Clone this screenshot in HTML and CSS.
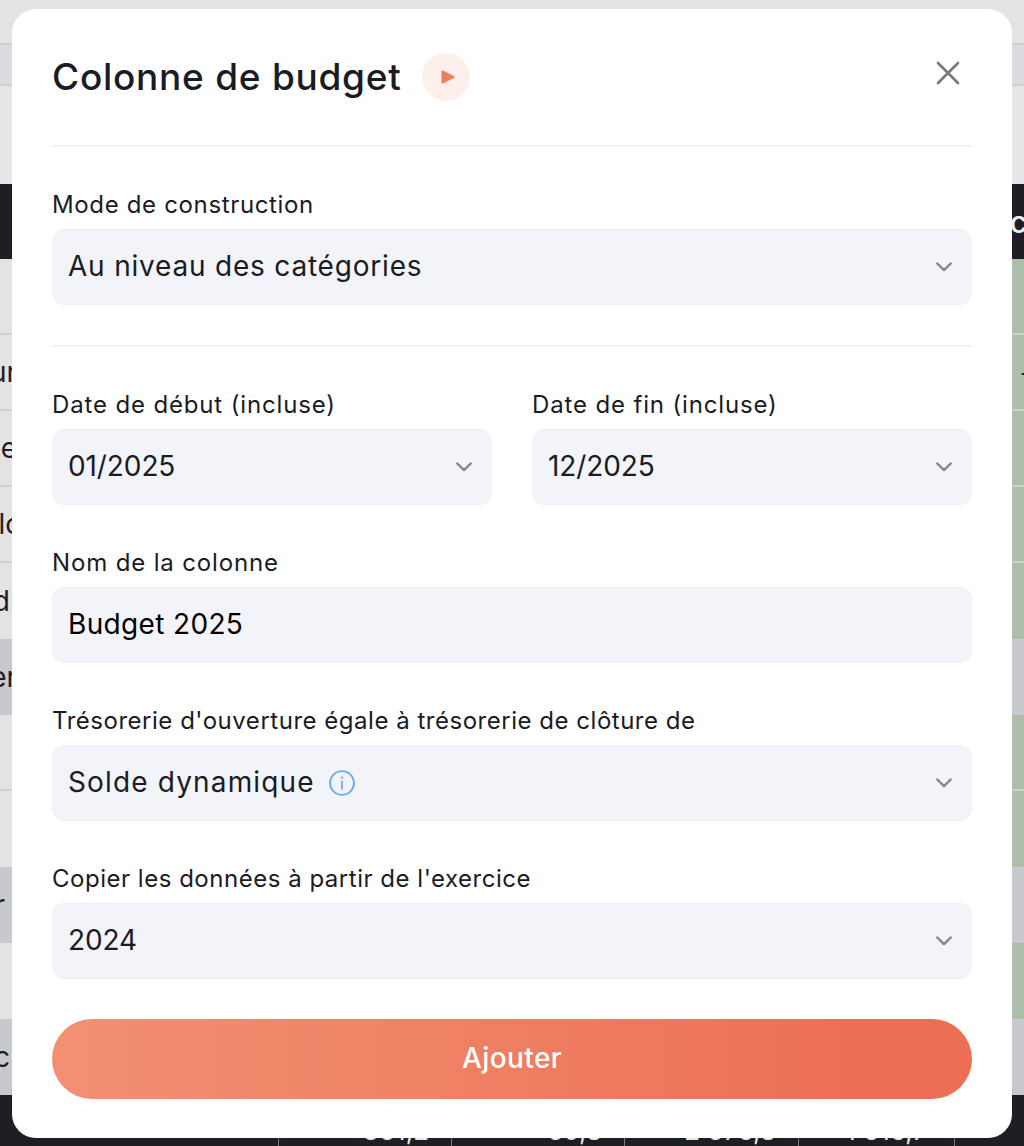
FILE: index.html
```html
<!DOCTYPE html>
<html lang="fr">
<head>
<meta charset="utf-8">
<title>Colonne de budget</title>
<link rel="stylesheet" href="styles.css">
</head>
<body>
<div class="page">
  <div class="backdrop">
    <div class="strip strip-top"></div>
    <div class="strip strip-sub"></div>
    <div class="strip strip-gap"></div>
    <div class="thead"><span class="right-frag">c</span></div>
    <div class="row"><span class="left"></span><span class="right"></span></div>
    <div class="row"><span class="left">ur</span><span class="right"><i class="dash">-</i></span></div>
    <div class="row"><span class="left">e</span><span class="right"></span></div>
    <div class="row"><span class="left narrow-lo">lo</span><span class="right"></span></div>
    <div class="row last"><span class="left narrow-d">d</span><span class="right"></span></div>
    <div class="row total"><span class="left">er</span><span class="right"></span></div>
    <div class="row"><span class="left"></span><span class="right"></span></div>
    <div class="row last"><span class="left"></span><span class="right"></span></div>
    <div class="row total"><span class="left narrow-r">r</span><span class="right"></span></div>
    <div class="row last"><span class="left"></span><span class="right"></span></div>
    <div class="row total"><span class="left narrow-d">c</span><span class="right"></span></div>
    <div class="tfoot">
      <span class="foot foot-a">361,2</span>
      <span class="foot foot-b">60,8</span>
      <span class="foot foot-c">2 676,8</span>
      <span class="foot foot-d">1 616,7</span>
      <span class="foot foot-e"></span>
    </div>
  </div>

  <section class="modal">
    <header class="modal-head">
      <h1 class="title">Colonne de budget</h1>
      <span class="play">
        <svg width="14" height="14" viewBox="0 0 14 14"><path d="M1.5 1.5 L12.5 7 L1.5 12.5 Z" fill="#ef7d60" stroke="#ef7d60" stroke-width="2" stroke-linejoin="round"/></svg>
      </span>
      <button class="close" type="button" aria-label="Fermer">
        <svg width="24" height="24" viewBox="0 0 24 24"><path d="M2 2 L22 22 M22 2 L2 22" stroke="#77777c" stroke-width="2.6" stroke-linecap="round" fill="none"/></svg>
      </button>
    </header>

    <div class="form">
      <div class="field">
        <label class="label label-mode">Mode de construction</label>
        <div class="control"><span class="value">Au niveau des catégories</span>
          <svg class="chev" width="16" height="10" viewBox="0 0 16 10"><path d="M1.3 1.5 L8 8.2 L14.7 1.5" stroke="#85858a" stroke-width="2.4" stroke-linecap="round" stroke-linejoin="round" fill="none"/></svg>
        </div>
      </div>

      <hr class="rule">

      <div class="pair">
        <div class="field">
          <label class="label label-wide">Date de début (incluse)</label>
          <div class="control"><span class="value value-digits">01/2025</span>
            <svg class="chev" width="16" height="10" viewBox="0 0 16 10"><path d="M1.3 1.5 L8 8.2 L14.7 1.5" stroke="#85858a" stroke-width="2.4" stroke-linecap="round" stroke-linejoin="round" fill="none"/></svg>
          </div>
        </div>
        <div class="field">
          <label class="label label-wide">Date de fin (incluse)</label>
          <div class="control"><span class="value value-digits">12/2025</span>
            <svg class="chev" width="16" height="10" viewBox="0 0 16 10"><path d="M1.3 1.5 L8 8.2 L14.7 1.5" stroke="#85858a" stroke-width="2.4" stroke-linecap="round" stroke-linejoin="round" fill="none"/></svg>
          </div>
        </div>
      </div>

      <div class="field">
        <label class="label label-wide">Nom de la colonne</label>
        <div class="control"><span class="value value-strong">Budget 2025</span></div>
      </div>

      <div class="field">
        <label class="label">Trésorerie d'ouverture égale à trésorerie de clôture de</label>
        <div class="control">
          <span class="value value-wide">Solde dynamique</span>
          <svg class="info" width="26" height="26" viewBox="0 0 26 26"><circle cx="13" cy="13" r="11.9" stroke="#6aa9f5" stroke-width="1.9" fill="none"/><path d="M13 11.5 V19" stroke="#6aa9f5" stroke-width="1.7" stroke-linecap="round"/><circle cx="13" cy="7.6" r="1.2" fill="#6aa9f5"/></svg>
          <svg class="chev" width="16" height="10" viewBox="0 0 16 10"><path d="M1.3 1.5 L8 8.2 L14.7 1.5" stroke="#85858a" stroke-width="2.4" stroke-linecap="round" stroke-linejoin="round" fill="none"/></svg>
        </div>
      </div>

      <div class="field">
        <label class="label">Copier les données à partir de l'exercice</label>
        <div class="control"><span class="value value-digits">2024</span>
          <svg class="chev" width="16" height="10" viewBox="0 0 16 10"><path d="M1.3 1.5 L8 8.2 L14.7 1.5" stroke="#85858a" stroke-width="2.4" stroke-linecap="round" stroke-linejoin="round" fill="none"/></svg>
        </div>
      </div>

      <button class="submit" type="button">Ajouter</button>
    </div>
  </section>
</div>
</body>
</html>
```
FILE: styles.css
```css
* { box-sizing: border-box; }
html, body { margin: 0; padding: 0; }
body { font-family: "Inter", "Liberation Sans", sans-serif; background: #e4e4e5; }

.page { position: relative; width: 1024px; height: 1146px; overflow: hidden; }

/* dimmed table behind the dialog */
.backdrop { display: flex; flex-direction: column; height: 100%; color: #1e1f24; font-size: 28px; }
.strip, .thead, .row { flex: none; }
.strip-top { height: 43px; background: #e3e3e4; }
.strip-sub { height: 43px; background: #dcdce0; border-top: 2px solid #d0d0d4; border-bottom: 2px solid #d0d0d4; }
.strip-gap { height: 98px; background: #e6e6e7; }
.thead { height: 75px; background: #1e1f24; display: flex; justify-content: flex-end; align-items: center; overflow: hidden; }
.right-frag { color: #f0f0f0; font-size: 30px; font-weight: 500; margin-right: -3px; white-space: nowrap; }
.row { height: 76px; display: flex; justify-content: space-between; align-items: stretch; background: #e3e3e4; border-bottom: 2px solid #cfcfd2; }
.row.last { border-bottom: 0; }
.row.total { background: #c8c9ce; border-bottom: 0; }
.left { width: 17px; display: flex; justify-content: flex-end; align-items: center; white-space: nowrap; overflow: hidden; }
.narrow-lo { width: 22px; }
.narrow-d { width: 10px; }
.narrow-r { width: 5px; }
.right { width: 12px; background: #aebdac; position: relative; overflow: hidden; display: flex; align-items: center; }
.row.total .right { background: #c8c9ce; }
.dash { font-style: normal; margin-left: 8px; color: #1e1f24; font-size: 24px; }
.tfoot { flex: 1; background: #1e1f24; display: flex; color: #e8e8e8; font-size: 26px; padding-top: 20px; padding-left: 278px; }
.foot { border-left: 1px solid #77777c; text-align: right; padding-right: 22px; height: 40px; flex: none; white-space: nowrap; }
.foot-a { width: 173px; }
.foot-b { width: 173px; }
.foot-c { width: 174px; }
.foot-d { width: 156px; padding-right: 27px; }
.foot-e { width: 70px; }

/* dialog */
.modal { position: absolute; left: 12px; top: 9px; width: 1000px; height: 1129px; background: #fff; border-radius: 24px; padding: 40px 40px 39px; color: #1a1b23; }
.modal-head { display: flex; align-items: center; gap: 20px; height: 56px; }
.title { margin: 0; font-size: 37px; font-weight: 500; letter-spacing: .74px; line-height: 56px; white-space: nowrap; }
.play { width: 48px; height: 48px; border-radius: 50%; background: #fdf0ec; display: flex; align-items: center; justify-content: center; padding-left: 4px; }
.play svg { display: block; }
.close { margin-left: auto; align-self: flex-start; width: 48px; height: 48px; border: 0; padding: 0; background: none; display: flex; align-items: center; justify-content: center; }

.form { display: flex; flex-direction: column; gap: 40px; margin-top: 40px; border-top: 2px solid #f2f2f7; padding-top: 40px; }
.rule { width: 100%; height: 2px; margin: 0; border: 0; background: #f2f2f7; }
.pair { display: grid; grid-template-columns: 440px 440px; column-gap: 40px; }
.field { display: flex; flex-direction: column; gap: 6px; }
.label { display: block; font-size: 24px; line-height: 36px; letter-spacing: .52px; white-space: nowrap; }
.label-mode { letter-spacing: .65px; }
.label-wide { letter-spacing: .85px; }
.control { height: 76px; background: #f3f4f9; border: 1px solid #f0f1f6; border-radius: 12px; display: flex; align-items: center; padding: 0 19px 0 15px; }
.value { font-size: 28px; line-height: 40px; letter-spacing: .8px; white-space: nowrap; margin-top: -2px; }
.value-strong { color: #000; letter-spacing: .35px; }
.value-digits { letter-spacing: -.1px; }
.value-wide { letter-spacing: 1.15px; }
.chev { margin-left: auto; flex: none; }
.info { margin-left: 14px; flex: none; }
.submit { height: 80px; width: 100%; border: 0; border-radius: 40px; padding: 0 0 2px; background: linear-gradient(90deg, #f29172 0%, #ec6f55 90%); color: #fff; font-family: inherit; font-size: 28px; font-weight: 500; letter-spacing: .4px; }
```
